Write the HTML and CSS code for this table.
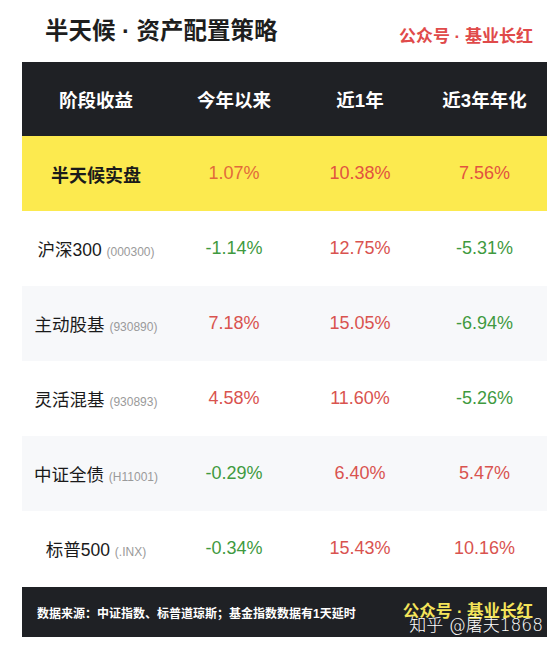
FILE: index.html
```html
<!DOCTYPE html>
<html lang="zh">
<head>
    <meta charset="UTF-8">
    <title>半天候 · 资产配置策略</title>
    <link rel="stylesheet" href="styles.css">
</head>
<body>
    <div class="page">
        <header class="title-bar">
            <h1>半天候 · 资产配置策略</h1>
            <span class="brand">公众号 · 基业长红</span>
        </header>

        <div class="table">
            <div class="row head">
                <div class="cell">阶段收益</div>
                <div class="cell">今年以来</div>
                <div class="cell">近1年</div>
                <div class="cell">近3年年化</div>
            </div>
            <div class="row highlight">
                <div class="cell name strong">半天候实盘</div>
                <div class="cell up first">1.07%</div>
                <div class="cell up">10.38%</div>
                <div class="cell up">7.56%</div>
            </div>
            <div class="row">
                <div class="cell name">沪深300 <span class="code">(000300)</span></div>
                <div class="cell down">-1.14%</div>
                <div class="cell up">12.75%</div>
                <div class="cell down">-5.31%</div>
            </div>
            <div class="row alt">
                <div class="cell name">主动股基 <span class="code">(930890)</span></div>
                <div class="cell up">7.18%</div>
                <div class="cell up">15.05%</div>
                <div class="cell down">-6.94%</div>
            </div>
            <div class="row">
                <div class="cell name">灵活混基 <span class="code">(930893)</span></div>
                <div class="cell up">4.58%</div>
                <div class="cell up">11.60%</div>
                <div class="cell down">-5.26%</div>
            </div>
            <div class="row alt">
                <div class="cell name">中证全债 <span class="code">(H11001)</span></div>
                <div class="cell down">-0.29%</div>
                <div class="cell up">6.40%</div>
                <div class="cell up">5.47%</div>
            </div>
            <div class="row">
                <div class="cell name">标普500 <span class="code">(.INX)</span></div>
                <div class="cell down">-0.34%</div>
                <div class="cell up">15.43%</div>
                <div class="cell up">10.16%</div>
            </div>
        </div>

        <footer class="foot">
            <span class="source">数据来源：中证指数、标普道琼斯；基金指数数据有1天延时</span>
            <span class="foot-brand">公众号 · 基业长红</span>
            <span class="watermark">知乎 @屠夫1868</span>
        </footer>
    </div>
</body>
</html>
```

FILE: styles.css
```css
body {
    margin: 0;
    background-color: #ffffff;
    font-family: "Liberation Sans", "Noto Sans CJK SC", sans-serif;
    color: #1a1a1a;
}

.page {
    width: 525px;
    margin-left: 22px;
}

.title-bar {
    height: 62px;
    display: flex;
    justify-content: space-between;
    align-items: center;
    padding: 0 14px 0 23px;
}

.title-bar h1 {
    margin: 0;
    font-size: 23.5px;
    font-weight: bold;
    color: #1e1e1e;
    position: relative;
    top: -2px;
}

.brand {
    font-size: 17px;
    font-weight: bold;
    color: #e04a4a;
    position: relative;
    top: 3px;
}

.row {
    display: grid;
    grid-template-columns: 148px 128px 124px 125px;
    height: 75px;
    align-items: center;
    background-color: #ffffff;
}

.row.head {
    height: 74px;
    background-color: #1f2125;
    color: #ffffff;
    font-weight: bold;
}

.row.head .cell {
    font-size: 18.5px;
}

.row.highlight {
    background-color: #fcea4f;
}

.row.alt {
    background-color: #f7f8fa;
}

.cell {
    text-align: center;
    font-size: 18px;
    white-space: nowrap;
}

.name {
    color: #1a1a1a;
    font-size: 17.5px;
}

.strong {
    font-weight: bold;
    font-size: 18px;
}

.code {
    font-size: 12px;
    color: #9a9a9a;
}

.up {
    color: #d9534f;
}

.highlight .up {
    color: #e2533f;
}

.highlight .first {
    color: #e26a3a;
}

.down {
    color: #3f9a3f;
}

.foot {
    position: relative;
    height: 50px;
    margin-top: 1px;
    background-color: #1f2125;
    display: flex;
    align-items: center;
    padding: 0 14px 0 15px;
    justify-content: space-between;
}

.source {
    font-size: 12px;
    font-weight: bold;
    color: #ffffff;
}

.foot-brand {
    font-size: 16.5px;
    font-weight: bold;
    color: #f4e45a;
    position: relative;
    top: -2px;
}

.watermark {
    position: absolute;
    right: 4px;
    bottom: 1px;
    font-size: 17px;
    color: #ffffff;
    font-family: "DejaVu Sans", "Noto Sans CJK SC", sans-serif;
    font-weight: 300;
}
```
